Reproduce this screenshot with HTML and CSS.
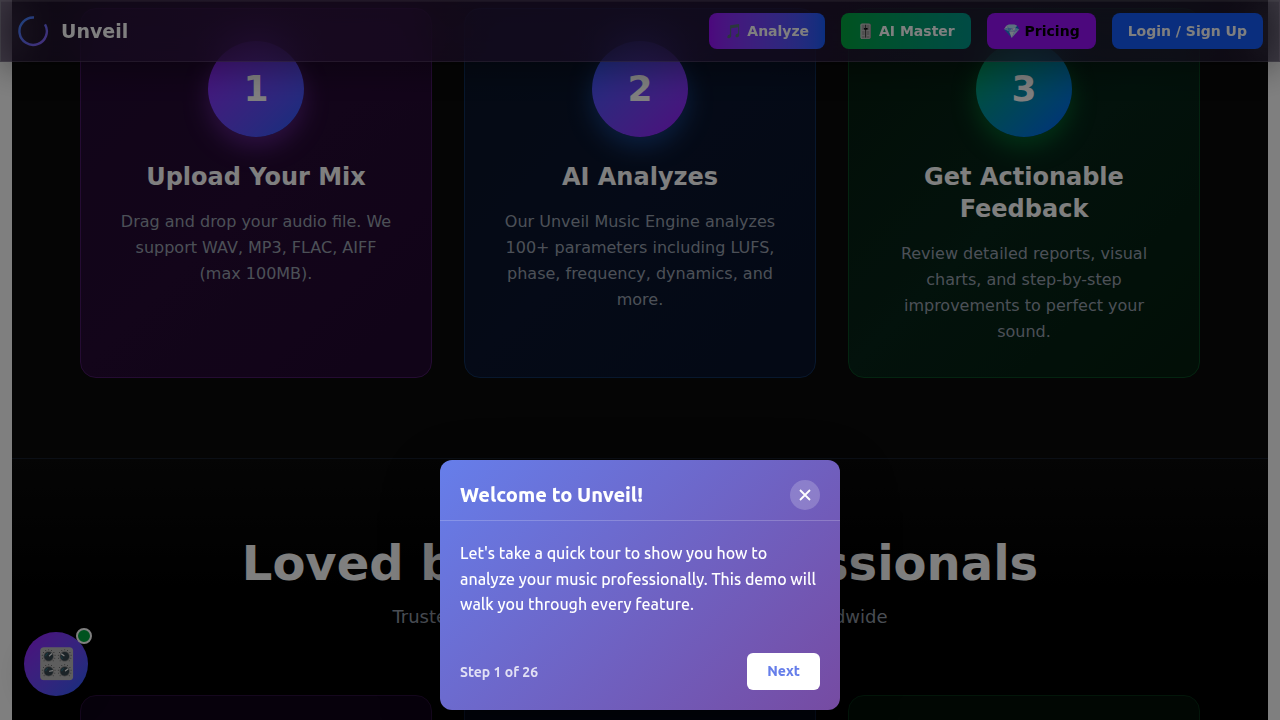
FILE: index.html
```html
<!DOCTYPE html>
<html lang="en">
<head>
  <meta charset="UTF-8">
  <meta name="viewport" content="width=device-width, initial-scale=1.0">
  <title>Unveil</title>
  <link rel="stylesheet" href="styles.css">
</head>
<body>
  <nav class="navbar">
    <a class="brand" href="#">
      <svg class="brand-logo" viewBox="0 0 32 32" fill="none">
        <defs>
          <linearGradient id="ring" x1="0" y1="0" x2="1" y2="1">
            <stop offset="0" stop-color="#3b82f6"/>
            <stop offset="1" stop-color="#8b5cf6"/>
          </linearGradient>
        </defs>
        <path d="M17 2.5A13.7 13.7 0 1 0 28 9.3" stroke="url(#ring)" stroke-width="2.4"/>
      </svg>
      <span>Unveil</span>
    </a>
    <div class="nav-links">
      <button class="btn btn-analyze">🎵 Analyze</button>
      <button class="btn btn-master">🎚️ AI Master</button>
      <button class="btn btn-pricing">💎 Pricing</button>
      <button class="btn btn-login">Login / Sign Up</button>
    </div>
  </nav>

  <main class="page">
    <section class="steps">
      <div class="grid">
        <div class="card card-purple">
          <div class="number number-1">1</div>
          <h3>Upload Your Mix</h3>
          <p>Drag and drop your audio file. We support WAV, MP3, FLAC, AIFF (max 100MB).</p>
        </div>
        <div class="card card-blue">
          <div class="number number-2">2</div>
          <h3>AI Analyzes</h3>
          <p>Our Unveil Music Engine analyzes 100+ parameters including LUFS, phase, frequency, dynamics, and more.</p>
        </div>
        <div class="card card-green">
          <div class="number number-3">3</div>
          <h3>Get Actionable Feedback</h3>
          <p>Review detailed reports, visual charts, and step-by-step improvements to perfect your sound.</p>
        </div>
      </div>
    </section>

    <section class="reviews">
      <h2>Loved by Music Professionals</h2>
      <p class="subtitle">Trusted by producers, engineers, and artists worldwide</p>
      <div class="grid">
        <div class="card review card-purple"></div>
        <div class="card review card-blue"></div>
        <div class="card review card-green"></div>
      </div>
    </section>
  </main>

  <button class="assistant" aria-label="Open assistant">
    <span class="assistant-icon">🎛️</span>
    <span class="assistant-status"></span>
  </button>

  <div class="overlay"></div>

  <div class="tour" role="dialog" aria-labelledby="tour-title">
    <div class="tour-header">
      <h3 id="tour-title">Welcome to Unveil!</h3>
      <button class="tour-close" aria-label="Close">
        <svg viewBox="0 0 12 12" width="12" height="12">
          <path d="M1 1L11 11M11 1L1 11" stroke="#fff" stroke-width="1.8"/>
        </svg>
      </button>
    </div>
    <div class="tour-body">
      <p>Let's take a quick tour to show you how to analyze your music professionally. This demo will walk you through every feature.</p>
    </div>
    <div class="tour-footer">
      <span class="tour-step">Step 1 of 26</span>
      <button class="tour-next">Next</button>
    </div>
  </div>
</body>
</html>
```

FILE: styles.css
```css
* {
  box-sizing: border-box;
  margin: 0;
  padding: 0;
}

body {
  height: 100vh;
  overflow: hidden;
  background: #fff;
  color: #fff;
  font-family: "DejaVu Sans", sans-serif;
  font-size: 16px;
}

button {
  border: none;
  font-family: inherit;
  cursor: pointer;
}

/* navbar */
.navbar {
  position: fixed;
  top: 0;
  left: 0;
  right: 0;
  z-index: 50;
  display: flex;
  justify-content: space-between;
  align-items: center;
  padding: 13px 17px;
}

.navbar::before {
  content: "";
  position: absolute;
  inset: 0;
  z-index: -1;
  opacity: 0.9;
  background: linear-gradient(90deg, rgba(42, 24, 60, 0.7), rgba(54, 25, 72, 0.7) 20%, rgba(48, 25, 68, 0.7) 60%, rgba(40, 32, 60, 0.7));
  border: 1px solid rgba(255, 255, 255, 0.14);
  box-shadow: 0 8px 32px rgba(0, 0, 0, 0.37), inset 0 1px 0 rgba(255, 255, 255, 0.1);
  backdrop-filter: blur(20px);
}

.brand {
  display: flex;
  align-items: center;
  gap: 12px;
  color: #fff;
  font-size: 19px;
  font-weight: 700;
  text-decoration: none;
}

.brand-logo {
  width: 32px;
  height: 32px;
}

.nav-links {
  display: flex;
  gap: 16px;
}

.btn {
  padding: 8px 16px;
  border-radius: 8px;
  color: #fff;
  font-size: 14px;
  font-weight: 600;
  line-height: 20px;
}

.btn-analyze {
  background: linear-gradient(to right in oklab, #9810fa, #155dfc);
}

.btn-master {
  background: linear-gradient(to right in oklab, #00a63e, #009689);
}

.btn-pricing {
  background: #9810fa;
  color: #000;
}

.btn-login {
  background: #155dfc;
}

/* page */
.page {
  margin: 0 12px;
  background: #0a0a0a;
}

.grid {
  display: grid;
  grid-template-columns: repeat(3, 1fr);
  gap: 32px;
  max-width: 1120px;
  margin: 0 auto;
}

.steps {
  padding: 8px 0 80px;
}

.card {
  padding: 32px;
  border: 1px solid;
  border-radius: 16px;
  text-align: center;
}

.card-purple {
  background: linear-gradient(135deg, #220a32, #260a34, #220830);
  border-color: #4a1866;
}

.card-blue {
  background: linear-gradient(135deg, #0a1428, #0a152e, #08122a);
  border-color: #10305c;
}

.card-green {
  background: linear-gradient(135deg, #051c0e, #062418, #041e0e);
  border-color: #084a22;
}

.card h3 {
  margin-bottom: 16px;
  font-size: 24px;
  line-height: 32px;
}

.card p {
  color: #99a1af;
  line-height: 26px;
}

.number {
  display: flex;
  justify-content: center;
  align-items: center;
  width: 96px;
  height: 96px;
  margin: 0 auto 24px;
  border-radius: 50%;
  font-size: 36px;
  font-weight: 700;
  line-height: 40px;
}

.number-1 {
  background: linear-gradient(135deg in oklab, #9810fa, #155dfc);
  box-shadow: 0 10px 24px rgba(173, 70, 255, 0.4);
}

.number-2 {
  background: linear-gradient(135deg in oklab, #155dfc, #9810fa);
  box-shadow: 0 10px 24px rgba(43, 127, 255, 0.4);
}

.number-3 {
  background: linear-gradient(135deg in oklab, #00a63e, #155dfc);
  box-shadow: 0 10px 24px rgba(0, 201, 80, 0.4);
}

.reviews {
  padding: 80px 0;
  border-top: 1px solid #161e2c;
  background: linear-gradient(to bottom, #0a0a0a, #000 140px);
  text-align: center;
}

.reviews h2 {
  margin-bottom: 16px;
  font-size: 48px;
  line-height: 48px;
}

.subtitle {
  margin-bottom: 64px;
  color: #99a1af;
  font-size: 18px;
  line-height: 28px;
}

.review {
  min-height: 240px;
}

.review.card-purple {
  background: #0e0318;
  border-color: #2a0e3c;
}

.review.card-blue {
  background: #020714;
  border-color: #0a1a36;
}

.review.card-green {
  background: #020e06;
  border-color: #062c14;
}

/* assistant bubble */
.assistant {
  position: fixed;
  left: 24px;
  bottom: 24px;
  z-index: 60;
  display: flex;
  justify-content: center;
  align-items: center;
  width: 64px;
  height: 64px;
  border-radius: 50%;
  background: linear-gradient(135deg in oklab, #9810fa, #155dfc);
  box-shadow: 0 10px 30px rgba(0, 0, 0, 0.2);
}

.assistant-icon {
  font-size: 30px;
  line-height: 36px;
}

.assistant-status {
  position: absolute;
  top: -4px;
  right: -4px;
  width: 16px;
  height: 16px;
  border: 2px solid #fff;
  border-radius: 50%;
  background: #00a63e;
}

/* tour */
.overlay {
  position: fixed;
  inset: 0;
  z-index: 100;
  background: rgba(0, 0, 0, 0.5);
}

.tour {
  position: fixed;
  left: 50%;
  bottom: 10px;
  z-index: 110;
  width: 400px;
  max-width: 90vw;
  transform: translateX(-50%);
  border-radius: 12px;
  background: linear-gradient(135deg, #667eea 0%, #764ba2 100%);
  box-shadow: 0 20px 60px rgba(0, 0, 0, 0.3);
  font-family: Ubuntu, Lato, sans-serif;
}

.tour-header {
  display: flex;
  justify-content: space-between;
  align-items: center;
  padding: 20px 20px 10px;
  border-bottom: 1px solid rgba(255, 255, 255, 0.2);
}

.tour-header h3 {
  font-size: 20px;
  font-weight: 800;
  line-height: 22px;
}

.tour-close {
  display: flex;
  justify-content: center;
  align-items: center;
  width: 30px;
  height: 30px;
  border-radius: 50%;
  background: rgba(255, 255, 255, 0.2);
}

.tour-body {
  padding: 20px;
  font-size: 16px;
  font-weight: 500;
  line-height: 1.6;
}

.tour-footer {
  display: flex;
  justify-content: space-between;
  align-items: center;
  padding: 15px 20px 20px;
}

.tour-step {
  font-size: 14px;
  font-weight: 600;
  line-height: 20px;
  opacity: 0.8;
}

.tour-next {
  padding: 8px 20px;
  border-radius: 6px;
  background: #fff;
  color: #667eea;
  font-size: 14px;
  font-weight: 800;
  line-height: 21px;
}
```
